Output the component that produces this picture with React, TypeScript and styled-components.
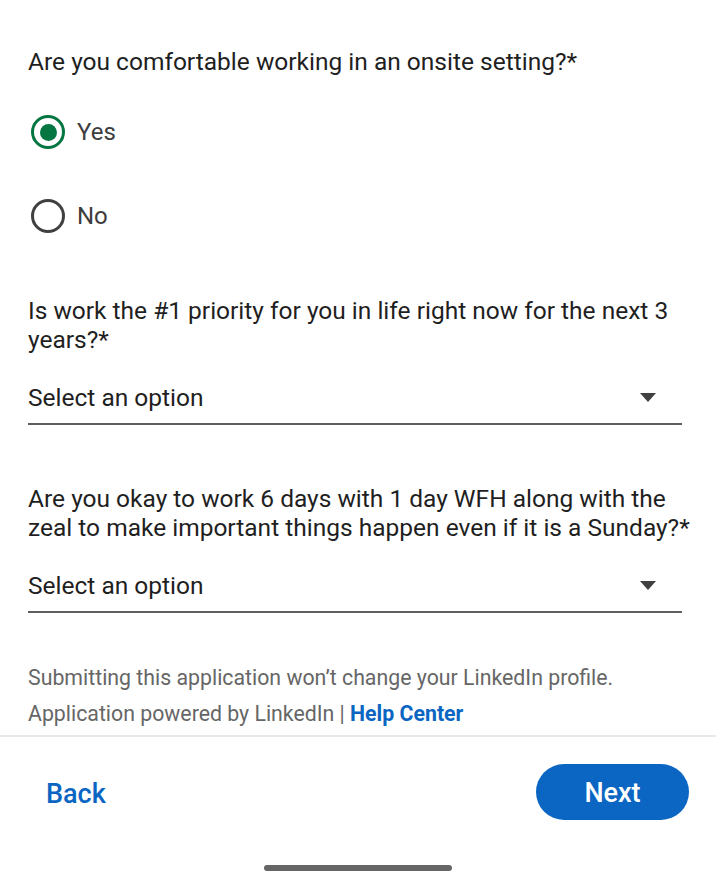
import { type FC, useState } from "react";
import styled, { createGlobalStyle } from "styled-components";

const GlobalStyle = createGlobalStyle`
  html, body {
    margin: 0;
    padding: 0;
    background: #ffffff;
  }
  body {
    font-family: Roboto, "Noto Sans", "Liberation Sans", sans-serif;
    color: #1f1f1f;
  }
  * {
    box-sizing: border-box;
  }
`;

const Page = styled.div`
  width: 716px;
  height: 890px;
  display: flex;
  flex-direction: column;
  overflow: hidden;
`;

const Form = styled.div`
  display: flex;
  flex-direction: column;
  padding: 47px 16px 0 28px;
`;

const Question = styled.div<{ $gap: number }>`
  font-size: 24.5px;
  line-height: 29px;
  color: #1f1f1f;
  margin-top: ${(p) => p.$gap}px;
`;

const RadioGroup = styled.div`
  display: flex;
  flex-direction: column;
  gap: 36px;
  margin-top: 32px;
`;

const RadioRow = styled.label`
  height: 48px;
  display: flex;
  align-items: center;
  gap: 12px;
  font-size: 24px;
  color: #3d3d3d;
  cursor: pointer;
`;

const RadioCircle = styled.span<{ $checked: boolean }>`
  width: 34px;
  height: 34px;
  margin-left: 3px;
  border-radius: 50%;
  border: 3.5px solid ${(p) => (p.$checked ? "#057642" : "#404040")};
  display: flex;
  align-items: center;
  justify-content: center;
  &::after {
    content: "";
    width: 17px;
    height: 17px;
    border-radius: 50%;
    background: #057642;
    display: ${(p) => (p.$checked ? "block" : "none")};
  }
`;

const Select = styled.div`
  display: flex;
  align-items: center;
  justify-content: space-between;
  margin-right: 18px;
  padding: 29px 26px 11px 0;
  border-bottom: 2px solid #5e5e5e;
  font-size: 24.5px;
  line-height: 29px;
  color: #1f1f1f;
  cursor: pointer;
`;

const Caret = styled.span`
  width: 0;
  height: 0;
  border-left: 8.5px solid transparent;
  border-right: 8.5px solid transparent;
  border-top: 9px solid #404040;
`;

const Footer = styled.div`
  margin-top: 47px;
  padding-bottom: 3px;
  font-size: 21.3px;
  line-height: 36px;
  color: #666666;
`;

const HelpLink = styled.a`
  color: #0a66c2;
  font-weight: 700;
  text-decoration: none;
`;

const ActionBar = styled.div`
  border-top: 2px solid #e8e8e8;
  display: flex;
  align-items: center;
  justify-content: space-between;
  padding: 27px 27px 0 28px;
`;

const TextButton = styled.button`
  border: none;
  background: transparent;
  padding: 4px 18px 0;
  height: 56px;
  font-family: inherit;
  font-size: 27px;
  font-weight: 500;
  color: #0a66c2;
  cursor: pointer;
`;

const PrimaryButton = styled.button`
  width: 153px;
  height: 56px;
  padding-top: 3px;
  border: none;
  border-radius: 28px;
  background: #0a66c2;
  color: #ffffff;
  font-family: inherit;
  font-size: 27px;
  font-weight: 500;
  cursor: pointer;
`;

const HomeBarWrap = styled.div`
  display: flex;
  justify-content: center;
  margin-top: 45px;
`;

const HomeBar = styled.div`
  width: 188px;
  height: 6px;
  border-radius: 3px;
  background: #656565;
`;

const App: FC = () => {
  const [onsite, setOnsite] = useState("Yes");

  return (
    <Page>
      <GlobalStyle />
      <Form>
        <Question $gap={0}>
          Are you comfortable working in an onsite setting?*
        </Question>
        <RadioGroup>
          {["Yes", "No"].map((opt) => (
            <RadioRow key={opt} onClick={() => setOnsite(opt)}>
              <RadioCircle $checked={onsite === opt} />
              {opt}
            </RadioRow>
          ))}
        </RadioGroup>

        <Question $gap={56}>
          Is work the #1 priority for you in life right now for the next 3
          years?*
        </Question>
        <Select>
          Select an option
          <Caret />
        </Select>

        <Question $gap={59}>
          Are you okay to work 6 days with 1 day WFH along with the zeal to
          make important things happen even if it is a Sunday?*
        </Question>
        <Select>
          Select an option
          <Caret />
        </Select>

        <Footer>
          Submitting this application won’t change your LinkedIn profile.
          <br />
          Application powered by LinkedIn | <HelpLink href="#">Help Center</HelpLink>
        </Footer>
      </Form>

      <ActionBar>
        <TextButton>Back</TextButton>
        <PrimaryButton>Next</PrimaryButton>
      </ActionBar>

      <HomeBarWrap>
        <HomeBar />
      </HomeBarWrap>
    </Page>
  );
};

export default App;
